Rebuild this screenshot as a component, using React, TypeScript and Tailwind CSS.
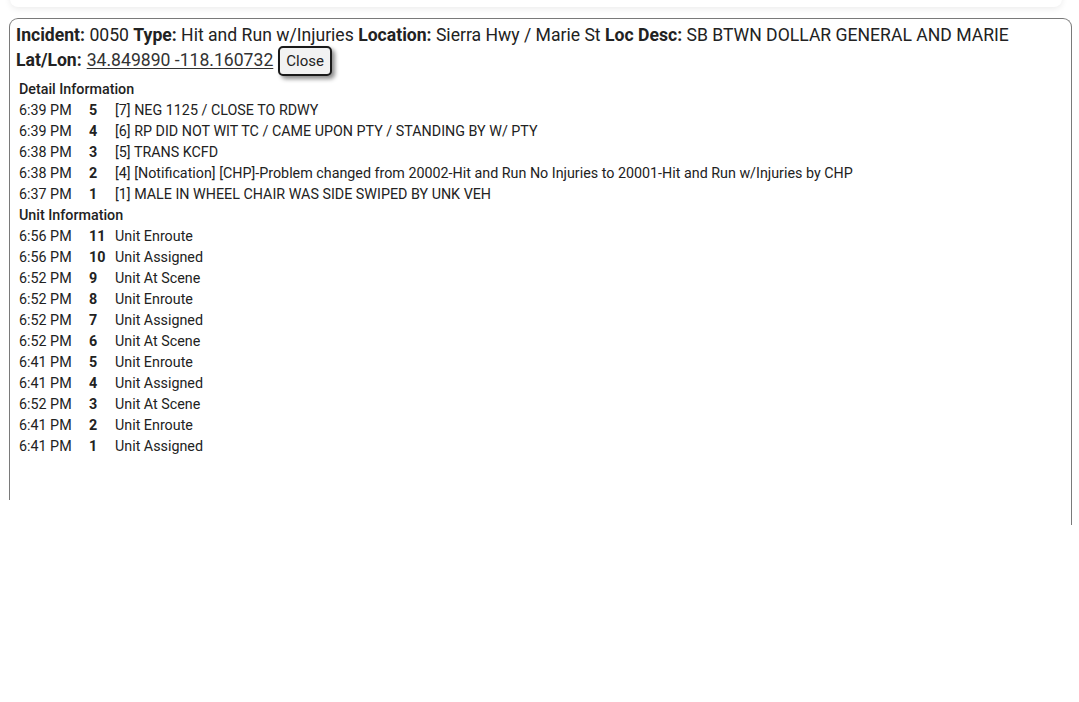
import React from "react";

const DETAILS = [
  { time: "6:39 PM", n: "5", text: "[7] NEG 1125 / CLOSE TO RDWY" },
  { time: "6:39 PM", n: "4", text: "[6] RP DID NOT WIT TC / CAME UPON PTY / STANDING BY W/ PTY" },
  { time: "6:38 PM", n: "3", text: "[5] TRANS KCFD" },
  { time: "6:38 PM", n: "2", text: "[4] [Notification] [CHP]-Problem changed from 20002-Hit and Run No Injuries to 20001-Hit and Run w/Injuries by CHP" },
  { time: "6:37 PM", n: "1", text: "[1] MALE IN WHEEL CHAIR WAS SIDE SWIPED BY UNK VEH" },
];

const UNITS = [
  { time: "6:56 PM", n: "11", text: "Unit Enroute" },
  { time: "6:56 PM", n: "10", text: "Unit Assigned" },
  { time: "6:52 PM", n: "9", text: "Unit At Scene" },
  { time: "6:52 PM", n: "8", text: "Unit Enroute" },
  { time: "6:52 PM", n: "7", text: "Unit Assigned" },
  { time: "6:52 PM", n: "6", text: "Unit At Scene" },
  { time: "6:41 PM", n: "5", text: "Unit Enroute" },
  { time: "6:41 PM", n: "4", text: "Unit Assigned" },
  { time: "6:52 PM", n: "3", text: "Unit At Scene" },
  { time: "6:41 PM", n: "2", text: "Unit Enroute" },
  { time: "6:41 PM", n: "1", text: "Unit Assigned" },
];

function Rows({ rows }: { rows: { time: string; n: string; text: string }[] }) {
  return (
    <div className="flex flex-col">
      {rows.map((r, i) => (
        <div key={i} className="flex h-[21px] items-center text-[14.3px] text-[#222]">
          <span className="w-[70px] shrink-0">{r.time}</span>
          <span className="w-[26px] shrink-0 font-bold">{r.n}</span>
          <span>{r.text}</span>
        </div>
      ))}
    </div>
  );
}

export default function App() {
  return (
    <div className="w-[1079px] h-[702px] bg-white overflow-hidden font-['Roboto',sans-serif]">
      <div className="mx-[10px] mr-[17px] mt-[-20px] h-[27px] rounded-b-lg bg-white shadow-[0_2px_6px_rgba(0,0,0,0.08)]" />

      <div className="ml-[9px] mr-[7px] mt-[11px] h-[482px] rounded-t-[9px] border-[1.5px] border-b-0 border-[#7a7a7a] px-[6px] pt-[4px]">
        <div className="text-[17.6px] leading-[25px] text-[#222]">
          <b className="font-bold">Incident:</b> 0050 <b className="font-bold">Type:</b> Hit and Run w/Injuries{" "}
          <b className="font-bold">Location:</b> Sierra Hwy / Marie St <b className="font-bold">Loc Desc:</b> SB BTWN DOLLAR GENERAL AND MARIE
        </div>
        <div className="flex h-[25px] items-center text-[17.6px] leading-[25px] text-[#222]">
          <b className="font-bold">Lat/Lon:</b>
          <span className="ml-[5px] underline underline-offset-2 text-[#333]">34.849890 -118.160732</span>
          <button className="ml-[5px] mt-[1px] h-[30px] shrink-0 rounded-[5px] border-2 border-[#1a1a1a] bg-[#f2f2f2] px-[6px] text-[15px] leading-none text-[#222] shadow-[3px_3px_4px_rgba(0,0,0,0.45)]">
            Close
          </button>
        </div>

        <div className="mt-[6px] pl-[3px]">
          <div className="h-[21px] flex items-center text-[14.3px] font-medium text-[#222]">Detail Information</div>
          <Rows rows={DETAILS} />
          <div className="h-[21px] flex items-center text-[14.3px] font-medium text-[#222]">Unit Information</div>
          <Rows rows={UNITS} />
        </div>
      </div>
      <div className="flex justify-end pr-[7px]">
        <div className="h-[25px] w-[1.5px] bg-[#7a7a7a]" />
      </div>
    </div>
  );
}
